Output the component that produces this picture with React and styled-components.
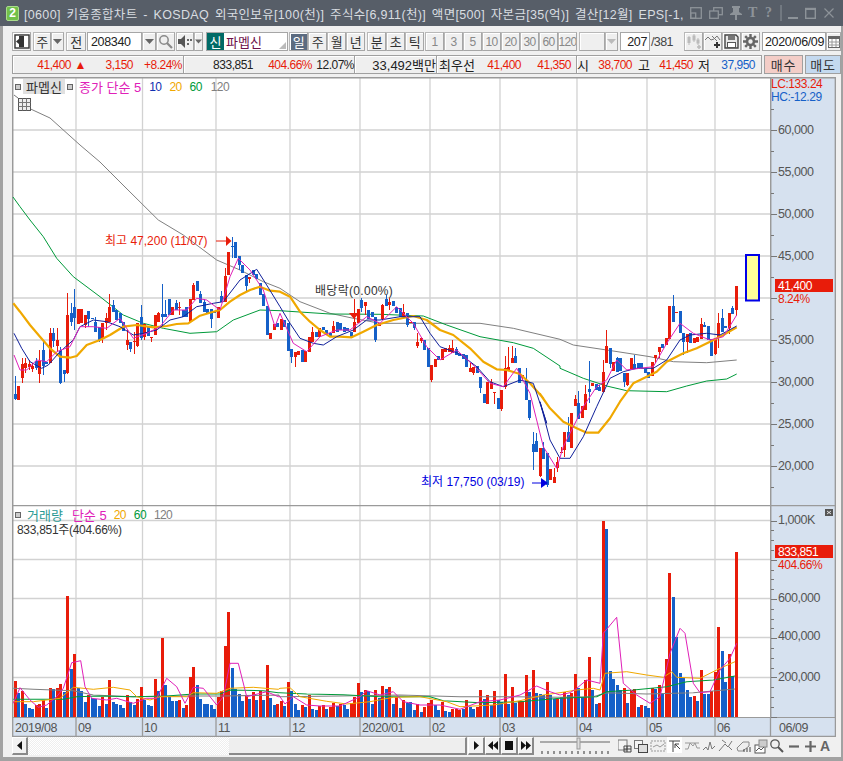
import React from "react";
import styled, { createGlobalStyle } from "styled-components";

const FONT = '"Liberation Sans","Noto Sans CJK KR",sans-serif';
const RED = "#e81c0a";
const BLUE = "#1560c8";
const PINK = "#e020b8";
const NAVY = "#10209a";
const ORANGE = "#f0a800";
const GREEN = "#009a3a";
const GRAY = "#808080";

const Global = createGlobalStyle`
  html, body { margin: 0; padding: 0; background: #f0f0f0; }
  #root { width: 843px; height: 761px; }
  * { box-sizing: border-box; }
`;

const Window = styled.div`
  width: 843px; height: 761px; display: flex; flex-direction: column; overflow: hidden;
  font-family: ${FONT}; font-size: 12px; letter-spacing: -0.6px; color: #333;
`;
const TitleBar = styled.div`
  height: 26px; flex: none; background: #575e68; display: flex; align-items: center;
  padding-left: 6px; color: #d9dde1;
`;
const AppBadge = styled.div`
  width: 13px; height: 15px; border-radius: 2px; background: #72c04a; color: #fff; border: 1px solid #a9dc8c;
  font-weight: bold; font-size: 12px; line-height: 13px; text-align: center; margin-right: 5px; letter-spacing: 0;
`;
const TitleText = styled.div`
  width: 660px; flex: none; white-space: nowrap; overflow: hidden; letter-spacing: 0.33px; font-size: 12.5px; word-spacing: 2px;
`;
const TitleIcons = styled.div`
  display: flex; align-items: center; margin-left: 6px; height: 26px;
`;
const TitleSvg = styled.svg`
  display: block; flex: none; margin-left: ${p => p.$ml || 0}px;
`;
const TitleGlyph = styled.span`
  font: bold 14px "Liberation Serif", serif; color: #8d9399; width: 11px; margin-left: ${p => p.$ml || 0}px; letter-spacing: 0;
`;
const Body = styled.div`
  flex: 1; display: flex; flex-direction: column; background: #f0f0f0;
  border-left: 3px solid #a2a2a2; border-right: 2px solid #a2a2a2; border-bottom: 4px solid #a2a2a2;
  padding: 6px 0 0 9px; position: relative;
`;
const Toolbar = styled.div`
  height: 19px; display: flex; align-items: stretch; flex: none;
`;
const ToolBtn = styled.div`
  width: ${p => p.$w}px; flex: none; margin-left: ${p => p.$ml || 0}px;
  display: flex; align-items: center; justify-content: center;
  background: ${p => (p.$active ? "#5c6b80" : "#efefef")};
  color: ${p => (p.$active ? "#fff" : p.$faint ? "#888" : "#333")};
  border: 1px solid #a6a6a6; border-top-color: #b8b8b8; border-left-color: #b8b8b8;
  box-shadow: inset 1px 1px 0 #fff;
  font-size: ${p => (p.$faint ? 12 : 13)}px; overflow: hidden;
`;
const Field = styled.div`
  width: ${p => p.$w}px; flex: none; margin-left: ${p => p.$ml || 0}px; background: #fff;
  border: 1px solid #a6a6a6; display: flex; align-items: center; padding-left: ${p => p.$pl ?? 3}px;
  color: #222; font-size: 12.5px; letter-spacing: -0.35px; justify-content: ${p => p.$end ? "flex-end" : "flex-start"};
  padding-right: 2px;
`;
const NameField = styled.div`
  width: 82px; flex: none; margin-left: 3px; background: #fff; border: 1px solid #a6a6a6; display: flex;
  align-items: stretch; position: relative; color: #6d0f4a; font-size: 13px; letter-spacing: 0;
`;
const SinTag = styled.div`
  width: 17px; background: #006a66; color: #fff; display: flex; align-items: center; justify-content: center; margin-right: 2px;
`;
const NameText = styled.div`
  display: flex; align-items: center;
`;
const Corner = styled.div`
  position: absolute; right: 1px; bottom: 1px; width: 0; height: 0;
  border-left: 7px solid transparent; border-bottom: 7px solid #bbb;
`;
const Count = styled.div`
  margin-left: 1px; width: 34px; display: flex; align-items: center; color: #444; font-size: 12.5px;
`;
const InfoRow = styled.div`
  height: 19px; margin-top: 4px; flex: none; display: flex;
`;
const InfoBox = styled.div`
  height: 19px; flex: none; width: ${p => p.$w}px; display: flex; align-items: center;
  background: #efefef; border: 1px solid #a0a0a0; border-left-width: ${p => (p.$first ? 1 : 0)}px;
  box-shadow: inset 1px 1px 0 #fff; position: relative; white-space: nowrap; color: #222;
`;
const InfoText = styled.span`
  width: ${p => p.$w}px; flex: none; text-align: right; color: ${p => p.$c || "#222"};
  font-size: ${p => (p.$ko ? 13 : 12)}px; letter-spacing: ${p => (p.$ko ? 0 : -0.5)}px;
`;
const TradeBtn = styled.div`
  width: ${p => p.$w}px; height: 19px; flex: none; margin-left: ${p => p.$ml}px; display: flex; align-items: center; justify-content: center;
  background: ${p => p.$bg}; border: 1px solid #a0a0a0; color: #333; font-size: 13px; letter-spacing: 0.8px;
`;
const Frame = styled.div`
  margin-top: 3px; width: 824px; flex: none; display: flex; flex-direction: column;
`;
const PaneRow = styled.div`
  display: flex; height: ${p => p.$h}px; flex: none; position: relative;
`;
const Plot = styled.svg`
  display: block; width: 758px; height: 100%; flex: none; background: #fff;
  font-family: ${FONT}; font-size: 12px; letter-spacing: -0.6px;
`;
const Axis = styled.svg`
  display: block; width: 66px; height: 100%; flex: none; background: #d6e1ef;
  font-family: ${FONT}; font-size: 12.5px; letter-spacing: -0.45px;
`;
const TimeStrip = styled.svg`
  display: block; width: 824px; height: 19px; flex: none; background: #d6e1ef;
  font-family: ${FONT}; font-size: 12.5px; letter-spacing: -0.45px;
`;
const Legend = styled.div`
  position: absolute; left: 3px; top: ${p => p.$top}px; display: flex; align-items: center; height: 15px; white-space: nowrap;
`;
const LegendSquare = styled.i`
  width: 6px; height: 6px; background: #ccc; border: 1px solid #666; margin: 0 ${p => p.$mr || 0}px 0 ${p => p.$ml || 0}px; flex: none;
`;
const StockChip = styled.span`
  height: 15px; width: 42px; background: #e0e0e0; display: flex; align-items: center; justify-content: center; margin: 0 2px 0 2px; color: #333; letter-spacing: 0; font-size: 13px;
`;
const LegendItem = styled.span`
  color: ${p => p.$c}; margin-left: ${p => p.$ml || 0}px; font-size: ${p => (p.$ko ? 13 : 12)}px; letter-spacing: ${p => (p.$ko ? 0 : -0.6)}px;
`;
const VolumeNote = styled.div`
  position: absolute; left: 5px; top: 15px; color: #333; font-size: 12px; letter-spacing: -0.3px; white-space: nowrap;
`;
const ScrollRow = styled.div`
  height: 18px; width: 824px; flex: none; display: flex; align-items: stretch;
`;
const ScrollBtn = styled.div`
  width: ${p => p.$w}px; flex: none; margin-left: ${p => p.$ml || 0}px; background: #f2f2f2; border-right: 2px solid #8a8a8a; border-bottom: 2px solid #8a8a8a;
  display: flex; align-items: center; justify-content: center; border-top: 1px solid #fff; border-left: 1px solid #fff;
`;
const ScrollTrack = styled.div`
  width: 201px; flex: none; background: repeating-conic-gradient(#fff 0 25%, #eee 0 50%) 0 0/2px 2px;
`;
const ScrollThumb = styled.div`
  width: 238px; flex: none; background: #eeeeee; border-top: 1px solid #fff; border-right: 2px solid #8a8a8a; border-bottom: 2px solid #8a8a8a;
`;
const IconStrip = styled.svg`
  display: block; flex: none; margin-left: 6px;
`;
const SliderSvg = styled.svg`
  display: block; margin-left: 6px; flex: none;
`;
const AGlyph = styled.span`
  font-weight: bold; font-size: 14px; color: #666; margin-left: -16px; letter-spacing: 0; line-height: 18px;
`;

const parse = (s, start, y0) =>
  s.trim().split(/\s+/).map((t, k) => {
    const c = t[0];
    const [a, b, h, l] = t.slice(1).split(",").map(Number);
    const Y = v => y0 + v / 3;
    return { i: start + k, c, top: Y(a), bot: Y(b), hi: Y(h ?? a), lo: Y(l ?? b) };
  });

const A = parse(`b522,537,468,540 r498,540 r432,473,415,490 r430,445,413,460 r432,440,420,450 r438,447,428,455 b424,445,415,450 r423,463,390,488 b390,437,365,465 b425,432 r340,428,325,430 b340,362,325,380 r360,378,325,395 b392,490,380,492 b450,462,450,485 r285,460,218,462 b280,305,250,318 b262,295,208,330 r268,312 r268,310 r285,315,285,325 b272,296,272,320 b295,297 b305,335,290,335 b320,360,320,365 r310,355,310,370 r293,308,280,330 r260,305,222,305 b255,275,240,275 b270,300 b280,310 b305,332 r360,375,330,390 b365,387,365,395 r362,367,335,402 r310,378,310,380 b292,355,255,360 r312,350,312,360 b322,348 r352,354,352,365 r285,345 r280,305,275,305 b283,290,192,320 b283,292,240,292 b238,285 r262,285 b250,270,240,270 r262,265,245,285 b270,290 b262,290 r238,305 r195,240,190,240 b182,212 b222,250,212,250 b245,275,238,275 b268,282 b268,298,268,325 b275,280 r262,295 b228,245,213,245 r168,245,145,245 r97,165 b78,82,52,115 b65,115 b108,135,108,150 b135,160 b165,198,165,215 r172,176,172,190 b150,165 b162,178 b190,225 b222,258 b258,345 r338,358 r312,330 b310,322`, 0, 220);
const B = parse(`r118,150 b120,140 b130,212 b208,230,208,250 r215,232,215,260 r213,225 b210,245 r212,245 r170,215 r155,185,140,185 b155,170 r145,170 b140,150 b150,165 b160,170 r138,160,122,160 b125,155 b130,150 b140,155 b145,152 b155,175 r125,155,58,155 r88,130 b60,85,55,95 r65,78,65,105 b90,118 b95,110 b110,180,110,185 r128,138 r75,118,72,120 b57,78,45,78 r65,75,55,90 b62,78 b80,100 b85,110 r97,110,72,110 b100,135,100,140 r125,130 b125,145,125,150 r187,197,160,203 r175,182,170,190 b180,210 b205,260 r255,300,255,305 r237,260 b228,240 r207,240 r203,215 r205,215,195,215 r205,220,180,220 b207,225,200,225 b222,228 b222,238 b225,262 r265,275,250,275 r262,280,262,285 b258,278 b290,325,290,340 b342,370 r305,373 r305,328,298,328 r335,340,335,372 b355,387 r330,388,330,392 r265,322,228,328 r262,272,200,272 r235,250,197,250 b228,250,205,250 b265,308,265,310 r285,292,285,300 b300,360,265,360 b360,415,360,420 b492,515,457,570 b483,515,460,515 r505,588,505,590 b505,538,485,538 b518,615,518,620 r568,600 r592,610,565,610 r545,565,530,575`, 76, 280);
const C = parse(`r635,640,620,640 r575,630,575,650 b575,605,530,605 r520,625 r478,498,465,498 b490,538,452,538 r498,535 r463,510,435,510 b448,456,362,490 r430,437 b432,450 b440,452,435,452 r397,455,360,455 r318,368,270,368 b323,372,323,385 r365,392 b355,395,350,395 b355,392 b400,425,400,442 r400,435,400,437 r355,388 b372,388,345,388 b370,388 b370,385 b388,400 b395,415 r365,408 r345,355,345,370 r322,335,322,355 b313,325 r295,315 r198,298 b198,247,165,247 r215,220 b212,280 b280,305,280,345 r282,305,282,340 b280,308 r295,310 r292,305 r252,298,235,298 b255,260,245,260 b258,300 b298,348 r295,342,295,345 r250,295,220,325 b235,275,207,275 b258,263 r220,265,220,282 b205,222,198,222 r138,210,138,228`, 156, 240);
const candles = [...A, ...B, ...C];

const path = (...segs) =>
  segs
    .flatMap(([x0, y0, s]) =>
      s.trim().split(/\s+/).map(p => {
        const [x, y] = p.split(",").map(Number);
        return `${(x0 + x / 3).toFixed(1)},${(y0 + y / 3).toFixed(1)}`;
      })
    )
    .join(" ");

const maOrange = path(
  [0, 220, "40,250 60,275 90,315 120,350 150,385 180,410 210,413 230,408 260,375 300,360 330,345 370,320 410,315 460,322 500,318 530,312 565,310 600,287 640,275 660,270 690,245 720,225 750,210 780,200 810,212 840,215"],
  [280, 280, "30,50 60,95 90,125 120,150 150,170 180,170 215,172 250,155 290,135 340,120 400,108 440,120 480,150 520,165 570,205 610,245 650,268 680,270 720,282 750,310 790,355"],
  [540, 240, "0,462 30,505 70,545 110,565 140,578 175,578 210,535 240,485 280,430 320,410 350,395 380,365 430,340 470,325 510,305 550,285 590,262"]
);
const maGray = path(
  [0, 0, "66,315 150,354 240,435 300,486 375,561"],
  [0, 220, "475,0 550,45 650,120 720,150 790,185 840,205"],
  [280, 280, "60,65 150,100 220,115 300,130 450,130 600,130 700,145 840,178"],
  [540, 240, "100,315 200,330 330,350 400,365 500,368 590,360"]
);
const maGreen = path(
  [0, 0, "39,591 60,620"],
  [0, 220, "90,0 130,50 170,115 220,170 300,230 370,285 430,310 490,325 570,340 650,335 700,300 780,270 840,272"],
  [280, 280, "0,92 150,102 300,103 430,108 500,135 600,170 700,188 760,205 840,258"],
  [540, 240, "60,385 130,415 200,438 260,452 380,455 440,438 500,423 560,417 590,402"]
);
const maNavy = path(
  [0, 220, "42,340 65,385 90,425 125,445 145,435 180,395 220,360 240,320 280,300 320,305 360,320 400,345 430,340 470,330 510,300 550,290 590,260 640,250 670,245 720,180 770,148 800,195 840,260"],
  [280, 280, "30,130 60,175 100,190 130,195 170,170 220,150 260,120 300,120 360,110 420,110 450,160 480,200 540,222 590,260 630,305 670,320 720,300 760,310 800,430"],
  [540, 240, "0,485 30,600 60,655 90,655 130,590 170,500 210,415 250,395 290,385 340,385 380,360 420,300 450,285 500,280 540,285 590,258"]
);
const maPink = path(
  [0, 220, "42,405 60,450 80,450 110,420 140,425 170,395 210,380 240,320 280,320 320,325 360,295 400,355 440,340 480,320 520,270 560,270 590,235 620,240 660,270 690,170 715,115 750,150 790,210 825,320"],
  [280, 280, "0,100 40,190 80,215 120,170 170,150 210,150 260,110 300,130 350,80 400,130 440,200 480,240 530,210 590,265 630,310 670,320 710,265 750,340 790,500 830,565"],
  [540, 240, "70,620 100,560 130,500 170,440 200,420 230,360 260,390 300,385 340,380 380,310 420,250 460,280 510,300 550,290 590,225"]
);

const volTokens = (
  "r543 b578 r573 b612 b624 b627 r615 r612 r600 b623 r564 b568 r564 r552 b575 r288 b508 r462 b563 b573 b605 r585 b594 b596 b618 r590 b611 r540 b606 b612 b615 b624 r585 b606 b614 r597 r561 b600 b616 b618 r537 b573 r414 b555 b590 b602 b603 r600 b624 r614 r531 r501 b555 b597 b612 b612 b615 b627 r590 r573 r438 r336 b504 b567 b582 b603 r588 b597 r576 b600 r573 b600 r495 b594 b615 r612 " +
  "r603 b618 r546 b573 b612 b630 r615 b621 r585 b627 b630 r618 r615 b627 r621 r609 b618 r612 b615 b627 r609 r590 r549 b576 r570 b573 b612 r570 b593 r558 b567 r561 b612 r590 b624 r600 b608 b606 b630 r612 b636 r621 r609 r600 b615 b630 r606 b633 b636 r628 r628 r630 b628 r600 b622 b627 r622 r570 b597 r585 b616 r573 b600 b606 r522 b612 r561 b609 r603 r603 r525 b576 r510 b579 b582 b585 r546 b585 b597 r597 " +
  "b590 r576 b585 r578 r522 b565 b590 r540 r471 b570 b612 r609 r63 b87 b513 b537 b555 b570 r564 b609 r570 r568 b621 r615 b618 b624 r564 b567 r555 b579 r477 r219 b291 b411 b519 b534 b570 b591 r588 b603 r510 b582 b582 r573 r516 r381 b453 b546 r462 b528 r156"
).split(" ");

const vPink = path(
  [0, 500, "40,610 60,563 90,600 115,622 140,615 170,590 190,565 215,488 242,482 255,560 275,595 320,600 350,595 400,610 440,595 470,595 500,535 530,560 555,610 580,562 610,565 650,615 670,590 690,490 715,490 740,590 800,575 835,590"],
  [280, 500, "0,590 15,612 40,590 80,615 120,618 180,618 240,590 260,572 300,585 340,575 370,605 420,615 480,615 540,628 600,605 660,600 720,585 770,558 810,575"],
  [560, 500, "0,585 30,578 50,565 80,540 120,550 130,400 170,352 190,550 230,585 270,610 300,590 330,460 360,385 375,400 400,550 420,578 450,575 480,510 510,475 530,430"]
);
const vOrange = path(
  [0, 500, "40,605 100,605 180,595 220,562 280,568 340,562 390,570 410,590 450,600 480,590 560,590 580,578 650,580 690,565 760,562 835,568"],
  [280, 500, "0,565 30,563 60,590 140,604 200,612 270,605 340,592 420,590 500,605 540,620 640,615 720,602 790,585"],
  [560, 500, "0,578 50,570 100,565 120,570 135,520 200,515 260,525 310,532 335,515 350,532 420,535 480,505 525,485"]
);
const vGreen = path(
  [0, 500, "40,598 120,598 190,598 230,590 300,588 400,590 500,588 580,582 660,582 690,570 790,572 835,578"],
  [280, 500, "0,578 80,582 190,584 300,590 450,590 490,602 600,608 720,605"],
  [560, 500, "0,595 110,590 140,575 220,570 320,560 380,545 460,540 525,528"]
);
const vGray = path(
  [0, 500, "40,565 100,568 220,572 280,585 400,590 560,588 670,588 835,585"],
  [280, 500, "0,590 180,588 360,585 540,590 700,590"],
  [560, 500, "0,592 100,590 140,578 260,582 400,578 525,567"]
);

const GRID_X = [76, 142.5, 216, 290, 360, 430, 500, 577, 647, 715];
const barX = i => 14.5 + 3.5 * i;

const FrameLine = ({ x1, y1, x2, y2 }) => <line x1={x1} y1={y1} x2={x2} y2={y2} stroke="#9a9a9a" strokeWidth="1.5" />;

const GridLines = ({ top, bottom, ys }) => (
  <g stroke="#d2d2d2" strokeWidth="1.3">
    {GRID_X.map(x => <line key={x} x1={x} y1={top} x2={x} y2={bottom} />)}
    {ys.map(y => <line key={y} x1="12" y1={y} x2="770" y2={y} />)}
  </g>
);

const PricePlot = () => (
  <Plot viewBox="12 77 758 428">
    <GridLines top={77} bottom={505} ys={[130, 172, 214, 256, 298, 340, 382, 424, 466]} />
    <FrameLine x1="12.7" y1="77" x2="12.7" y2="505" />
    <FrameLine x1="12" y1="77.7" x2="770" y2="77.7" />
    <g fill="none" strokeLinejoin="round">
      <polyline points={maGray} stroke={GRAY} strokeWidth="1" />
      <polyline points={maGreen} stroke={GREEN} strokeWidth="1" />
    </g>
    {candles.map(d => {
      const x = Math.round(barX(d.i));
      const col = d.c === "r" ? RED : BLUE;
      return (
        <g key={d.i} fill={col} shapeRendering="crispEdges">
          <rect x={x} y={d.hi} width="1" height={Math.max(d.lo - d.hi, 1)} />
          <rect x={x - 1} y={d.top} width="3" height={Math.max(d.bot - d.top, 1)} />
        </g>
      );
    })}
    <g fill="none" strokeLinejoin="round">
      <polyline points={maOrange} stroke={ORANGE} strokeWidth="2.2" />
      <polyline points={maNavy} stroke={NAVY} strokeWidth="1" />
      <polyline points={maPink} stroke={PINK} strokeWidth="1" />
    </g>
    <text x="105" y="245" fill={RED} letterSpacing="0">최고 47,200 (11/07)</text>
    <line x1="216" y1="241" x2="226" y2="241" stroke={RED} strokeWidth="1" />
    <polygon points="226,236 231.5,241 226,246" fill={RED} />
    <text x="315" y="295" fill="#333" letterSpacing="0.3">배당락(0.00%)</text>
    <polygon points="349,313 359,313 354,319" fill={RED} />
    <text x="421" y="486" fill="#0000e0" letterSpacing="0">최저 17,750 (03/19)</text>
    <line x1="532" y1="483" x2="543" y2="483" stroke="#0000e0" strokeWidth="1" />
    <polygon points="541,478 548,483 541,488" fill="#0000e0" />
    <rect x="746" y="255" width="13" height="45.5" fill="#ffff99" stroke="#0000e8" strokeWidth="2" />
    <g fill="none" stroke="#777" strokeWidth="1">
      <rect x="18.5" y="98.5" width="12" height="12" fill="#eee" stroke="#555" />
      <path d="M18.5 102.5h12M18.5 106.5h12M22.5 98.5v12M26.5 98.5v12M14 95l4 3" />
    </g>
  </Plot>
);

const PriceAxis = () => (
  <Axis viewBox="770 77 66 428">
    <FrameLine x1="770.7" y1="77" x2="770.7" y2="505" />
    <FrameLine x1="835.4" y1="77" x2="835.4" y2="505" />
    <FrameLine x1="770" y1="77.7" x2="836" y2="77.7" />
    <text x="771" y="88" fill="#e81c0a" fontSize="12">LC:133.24</text>
    <text x="771" y="101" fill="#1560c8" fontSize="12">HC:-12.29</text>
    <g stroke="#777" strokeWidth="1">
      {Array.from({ length: 20 }, (_, k) => 109 + 21 * k).map(y => (
        <line key={y} x1="771" x2={(y - 130) % 42 === 0 ? 777 : 774} y1={y + 0.5} y2={y + 0.5} />
      ))}
    </g>
    <g fill="#555">
      {["60,000", "55,000", "50,000", "45,000", "", "35,000", "30,000", "25,000", "20,000"].map((t, k) => t && (
        <text key={t} x="778" y={134 + 42 * k}>{t}</text>
      ))}
    </g>
    <rect x="775" y="279" width="58" height="13" fill={RED} />
    <text x="778" y="290" fontSize="12" fill="#fff">41,400</text>
    <text x="778" y="303" fontSize="12" fill={RED}>8.24%</text>
  </Axis>
);

const VolumePlot = () => (
  <Plot viewBox="12 505 758 213">
    <GridLines top={505} bottom={718} ys={[520.5, 559.5, 598.5, 637.5, 677.5]} />
    <FrameLine x1="12.7" y1="505" x2="12.7" y2="718" />
    <FrameLine x1="12" y1="505.5" x2="770" y2="505.5" />
    <FrameLine x1="12" y1="717.7" x2="770" y2="717.7" />
    {volTokens.map((t, i) => {
      const top = 500 + Number(t.slice(1)) / 3;
      return (
        <rect key={i} x={Math.round(barX(i)) - 1} y={top} width="3" height={717 - top}
          fill={t[0] === "r" ? RED : BLUE} shapeRendering="crispEdges" />
      );
    })}
    <g fill="none" strokeWidth="1" strokeLinejoin="round">
      <polyline points={vGray} stroke={GRAY} strokeWidth="1.1" />
      <polyline points={vGreen} stroke={GREEN} strokeWidth="1.1" />
      <polyline points={vOrange} stroke={ORANGE} />
      <polyline points={vPink} stroke={PINK} />
    </g>
  </Plot>
);

const VolumeAxis = () => (
  <Axis viewBox="770 505 66 213">
    <FrameLine x1="770.7" y1="505" x2="770.7" y2="718" />
    <FrameLine x1="835.4" y1="505" x2="835.4" y2="718" />
    <FrameLine x1="770" y1="505.5" x2="836" y2="505.5" />
    <FrameLine x1="770" y1="717.7" x2="836" y2="717.7" />
    <g stroke="#777" strokeWidth="1">
      {Array.from({ length: 21 }, (_, k) => 520.5 + 9.8 * k).map((y, k) => (
        <line key={k} x1="771" x2={k % 4 === 0 ? 777 : 774} y1={Math.round(y) + 0.5} y2={Math.round(y) + 0.5} />
      ))}
    </g>
    <g fill="#555">
      <text x="778" y="524">1,000K</text>
      <text x="778" y="602">600,000</text>
      <text x="778" y="640">400,000</text>
      <text x="778" y="681">200,000</text>
    </g>
    <rect x="825" y="509" width="8" height="7" fill="#555" />
    <path d="M827 511l4 3M831 511l-4 3" stroke="#fff" strokeWidth="0.8" />
    <rect x="775" y="545" width="58" height="13" fill={RED} />
    <text x="778" y="556" fontSize="12" fill="#fff">833,851</text>
    <text x="778" y="569" fontSize="12" fill={RED}>404.66%</text>
  </Axis>
);

const TIME = [["2019/08", 15], ["09", 78], ["10", 144], ["11", 218], ["12", 292], ["2020/01", 362], ["02", 432], ["03", 502], ["04", 579], ["05", 649], ["06", 717]];
const TimeAxis = () => (
  <TimeStrip viewBox="12 718 824 19">
    <g stroke="#9a9a9a" strokeWidth="1.3">
      {[...GRID_X, 770.5].map(x => <line key={x} x1={x} y1="718" x2={x} y2="737" />)}
      <line x1="12.7" y1="718" x2="12.7" y2="737" />
      <line x1="835.4" y1="718" x2="835.4" y2="737" />
      <line x1="12" y1="736.3" x2="836" y2="736.3" />
    </g>
    <g fill="#555">
      {TIME.map(([t, x]) => <text key={t} x={x} y="732">{t}</text>)}
      <text x="779" y="732">06/09</text>
    </g>
  </TimeStrip>
);

const Caret = ({ c = "#666" }) => (
  <svg width="9" height="5" viewBox="0 0 9 5"><polygon points="0,0 9,0 4.5,5" fill={c} /></svg>
);
const PanelIcon = () => (
  <svg width="16" height="15" viewBox="0 0 16 15">
    <rect x="1" y="1" width="14" height="13" fill="#fff" stroke="#333" strokeWidth="1.4" />
    <rect x="5" y="2" width="5" height="11" fill="#333" />
    <polygon points="2,7.5 6,4 6,11" fill="#333" />
  </svg>
);
const SearchIcon = () => (
  <svg width="15" height="15" viewBox="0 0 15 15" fill="none" stroke="#8a8a8a">
    <circle cx="6" cy="6" r="4.2" strokeWidth="1.5" />
    <path d="M9 9l5 5" strokeWidth="2.2" />
  </svg>
);
const SpeakerIcon = () => (
  <svg width="14" height="13" viewBox="0 0 14 13">
    <polygon points="0,4 3,4 7,0 7,13 3,9 0,9" fill="#555" />
    <path d="M9 4h2v2H9zM9 8h2v2H9zM12 4h2v2h-2z" fill="#666" />
  </svg>
);
const CandleAddIcon = () => (
  <svg width="16" height="15" viewBox="0 0 16 15">
    <path d="M3 2v9M8 0v8M12 4v7" stroke="#bbb" />
    <rect x="1.5" y="3" width="3" height="6" fill="#bbb" />
    <rect x="6.5" y="1.5" width="3" height="5" fill="#bbb" />
    <rect x="10.5" y="5.5" width="3" height="4" fill="#bbb" />
    <path d="M11 13h4M13 11v4" stroke="#bbb" strokeWidth="1.5" />
  </svg>
);
const LineAddIcon = () => (
  <svg width="16" height="15" viewBox="0 0 16 15" fill="none">
    <path d="M0 6l3-3 3 3 3-1 3-3 3 4" stroke="#777" />
    <path d="M7 2l5 5" stroke="#777" />
    <path d="M9 11h6M12 8v6" stroke="#333" strokeWidth="2" />
  </svg>
);
const SaveIcon = () => (
  <svg width="15" height="15" viewBox="0 0 15 15">
    <path d="M1 1h11l2 2v11H1z" fill="#e8e8e8" stroke="#444" strokeWidth="1.4" />
    <rect x="4" y="2" width="7" height="4" fill="#777" />
    <rect x="3.5" y="8.5" width="8" height="5" fill="#fff" stroke="#555" />
  </svg>
);
const GearIcon = () => (
  <svg width="15" height="15" viewBox="0 0 15 15">
    <circle cx="7.5" cy="7.5" r="3.5" fill="none" stroke="#666" strokeWidth="2.6" />
    <g stroke="#666" strokeWidth="2.4">
      <path d="M7.5 0v3M7.5 12v3M0 7.5h3M12 7.5h3M2.2 2.2l2 2M10.8 10.8l2 2M12.8 2.2l-2 2M4.2 10.8l-2 2" />
    </g>
  </svg>
);
const CalIcon = () => (
  <svg width="12" height="13" viewBox="0 0 12 13">
    <rect x="0.5" y="1.5" width="11" height="11" fill="#fff" stroke="#666" />
    <rect x="0" y="1" width="12" height="3" fill="#666" />
    <path d="M4 4v8M8 4v8M0 7h12M0 10h12" stroke="#999" />
  </svg>
);
const ArrowRow = ({ d }) => (
  <svg width="12" height="11" viewBox="0 0 12 11"><path d={d} fill="#111" /></svg>
);

const TitleActions = () => (
  <TitleIcons>
    <TitleSvg $ml={0} width="12" height="12" viewBox="0 0 12 12" fill="none" stroke="#8d9399" strokeWidth="1.3">
      <rect x="0.7" y="0.7" width="10.6" height="10.6" /><rect x="0.7" y="6" width="5" height="5.3" />
    </TitleSvg>
    <TitleSvg $ml={7} width="14" height="12" viewBox="0 0 14 12" fill="none" stroke="#8d9399" strokeWidth="1.3">
      <rect x="4.7" y="0.7" width="8.6" height="7" /><rect x="0.7" y="4" width="8.6" height="7.3" fill="#575e68" />
    </TitleSvg>
    <TitleSvg $ml={7} width="12" height="14" viewBox="0 0 12 14" fill="#8d9399">
      <path d="M2 0h8v2H9v4l3 2v1H7v5H5V9H0V8l3-2V2H2z" />
    </TitleSvg>
    <TitleGlyph $ml={6}>T</TitleGlyph>
    <TitleGlyph $ml={6}>?</TitleGlyph>
    <TitleSvg $ml={3} width="44" height="16" viewBox="0 0 44 16" fill="none" stroke="#8d9399" strokeWidth="1.4">
      <path d="M2 0v16" strokeWidth="1" />
      <path d="M9 13h10" strokeWidth="2" />
    </TitleSvg>
    <TitleSvg $ml={-18} width="11" height="12" viewBox="0 0 11 12" fill="none" stroke="#8d9399">
      <rect x="0.7" y="1.5" width="9.6" height="9.8" strokeWidth="1.4" /><path d="M0 2h11" strokeWidth="2" />
    </TitleSvg>
    <TitleSvg $ml={8} width="10" height="10" viewBox="0 0 10 10" stroke="#8d9399" strokeWidth="1.2">
      <path d="M0.5 0.5l9 9M9.5 0.5l-9 9" />
    </TitleSvg>
  </TitleIcons>
);

const BottomIcons = () => (
  <IconStrip width="218" height="18" viewBox="618 737 218 18" fill="none" stroke="#777">
    <rect x="618" y="740" width="9" height="10" fill="#f4f4f4" />
    <path d="M624 746h7v6h-7zM627 746v6M624 749h7" stroke="#444" />
    <rect x="634.5" y="740.5" width="8" height="8" fill="#f4f4f4" />
    <rect x="638.5" y="744.5" width="9" height="8" fill="#ddd" stroke="#444" />
    <path d="M651 741h14v10h-14z" strokeDasharray="2 1" stroke="#999" />
    <path d="M653 747l4-2 3 2 4-3" stroke="#999" />
    <rect x="667" y="737" width="15" height="16" fill="#fff" stroke="none" />
    <path d="M669 741h11M673 741v11" stroke="#444" strokeWidth="1" />
    <path d="M675 744l5 5M675 744v4M675 744h4" stroke="#444" />
    <path d="M685 749h3l2-6 3 3 2-3 2 5h3M685 743h14" stroke="#999" />
    <path d="M703 750l3-3 2 3 2-8 2 7 3-3" stroke="#777" />
    <path d="M719 751l6-7 3 3 4-6M722 740l4 3M729 747l3 3" stroke="#777" />
    <path d="M737 748l6-6h6v4l-6 5h-5z" fill="#eee" stroke="#888" />
    <path d="M744 752v-3M747 752v-4M750 752v-5" stroke="#444" />
    <rect x="755" y="745" width="10" height="8" fill="#fff" stroke="#555" />
    <rect x="759" y="740" width="8" height="7" fill="#ccc" stroke="#888" />
    <path d="M756 751l3-3 2 2 3-3" stroke="#555" />
    <circle cx="775" cy="744" r="4.2" strokeWidth="1.3" stroke="#555" />
    <path d="M778 747l5 5" strokeWidth="2" stroke="#555" />
    <path d="M789 746.5h10" strokeWidth="2.2" stroke="#666" />
    <path d="M805 746.5h11M810.5 741v11" strokeWidth="2.2" stroke="#666" />
  </IconStrip>
);

const Slider = () => (
  <SliderSvg width="72" height="18" viewBox="0 0 72 18">
    <line x1="0" y1="5" x2="70" y2="5" stroke="#aaa" strokeWidth="2" />
    <rect x="37" y="1" width="3" height="11" fill="#ddd" stroke="#999" />
    {Array.from({ length: 12 }, (_, k) => <line key={k} x1={2 + k * 6} x2={2 + k * 6} y1="14" y2="17" stroke="#333" />)}
  </SliderSvg>
);

export default function App() {
  return (
    <Window>
      <Global />
      <TitleBar>
        <AppBadge>2</AppBadge>
        <TitleText>[0600] 키움종합차트 - KOSDAQ 외국인보유[100(천)] 주식수[6,911(천)] 액면[500] 자본금[35(억)] 결산[12월] EPS[-1,</TitleText>
        <TitleActions />
      </TitleBar>
      <Body>
        <Toolbar>
          <ToolBtn $w={19}><PanelIcon /></ToolBtn>
          <ToolBtn $w={18} $ml={2}>주</ToolBtn>
          <ToolBtn $w={13}><Caret /></ToolBtn>
          <ToolBtn $w={20} $ml={2}>전</ToolBtn>
          <Field $w={55} $ml={1}>208340</Field>
          <ToolBtn $w={14}><Caret /></ToolBtn>
          <ToolBtn $w={19}><SearchIcon /></ToolBtn>
          <ToolBtn $w={18} $ml={1}><SpeakerIcon /></ToolBtn>
          <ToolBtn $w={9}><Caret /></ToolBtn>
          <NameField>
            <SinTag>신</SinTag>
            <NameText>파멥신</NameText>
            <Corner />
          </NameField>
          <ToolBtn $w={19} $ml={1} $active>일</ToolBtn>
          <ToolBtn $w={19}>주</ToolBtn>
          <ToolBtn $w={19}>월</ToolBtn>
          <ToolBtn $w={19}>년</ToolBtn>
          <ToolBtn $w={19} $ml={2}>분</ToolBtn>
          <ToolBtn $w={19}>초</ToolBtn>
          <ToolBtn $w={19}>틱</ToolBtn>
          {["1", "3", "5", "10", "20", "30", "60", "120"].map((t, k) => (
            <ToolBtn key={t} $w={19} $ml={k === 0 ? 1 : 0} $faint>{t}</ToolBtn>
          ))}
          <ToolBtn $w={26} $ml={2} />
          <ToolBtn $w={13}><Caret c="#bbb" /></ToolBtn>
          <Field $w={30} $ml={2} $end>207</Field>
          <Count>/381</Count>
          <ToolBtn $w={19} $ml={-1}><CandleAddIcon /></ToolBtn>
          <ToolBtn $w={19}><LineAddIcon /></ToolBtn>
          <ToolBtn $w={19}><SaveIcon /></ToolBtn>
          <ToolBtn $w={19}><GearIcon /></ToolBtn>
          <Field $w={64} $ml={2} $pl={2}>2020/06/09</Field>
          <ToolBtn $w={15}><CalIcon /></ToolBtn>
        </Toolbar>
        <InfoRow>
          <InfoBox $w={172} $first>
            <InfoText $w={58} $c={RED}>41,400</InfoText>
            <InfoText $w={15} $c={RED}>▲</InfoText>
            <InfoText $w={47} $c={RED}>3,150</InfoText>
            <InfoText $w={49} $c={RED}>+8.24%</InfoText>
          </InfoBox>
          <InfoBox $w={171}>
            <InfoText $w={69}>833,851</InfoText>
            <InfoText $w={59} $c={RED}>404.66%</InfoText>
            <InfoText $w={42}>12.07%</InfoText>
          </InfoBox>
          <InfoBox $w={82}>
            <InfoText $w={81} $ko>33,492백만</InfoText>
          </InfoBox>
          <InfoBox $w={140}>
            <InfoText $w={38} $ko>최우선</InfoText>
            <InfoText $w={46} $c={RED}>41,400</InfoText>
            <InfoText $w={50} $c={RED}>41,350</InfoText>
          </InfoBox>
          <InfoBox $w={185}>
            <InfoText $w={12} $ko>시</InfoText>
            <InfoText $w={43} $c={RED}>38,700</InfoText>
            <InfoText $w={18} $ko>고</InfoText>
            <InfoText $w={43} $c={RED}>41,450</InfoText>
            <InfoText $w={17} $ko>저</InfoText>
            <InfoText $w={45} $c={BLUE}>37,950</InfoText>
          </InfoBox>
          <TradeBtn $w={39} $ml={2} $bg="#f3cdc7">매수</TradeBtn>
          <TradeBtn $w={36} $ml={2} $bg="#c4d9ef">매도</TradeBtn>
        </InfoRow>
        <Frame>
          <PaneRow $h={428}>
            <PricePlot />
            <PriceAxis />
            <Legend $top={2}>
              <LegendSquare />
              <StockChip>파멥신</StockChip>
              <LegendSquare $mr={6} />
              <LegendItem $c={PINK} $ko>종가 단순 5</LegendItem>
              <LegendItem $c="#1030b0" $ml={8}>10</LegendItem>
              <LegendItem $c={ORANGE} $ml={8}>20</LegendItem>
              <LegendItem $c={GREEN} $ml={8}>60</LegendItem>
              <LegendItem $c={GRAY} $ml={9}>120</LegendItem>
            </Legend>
          </PaneRow>
          <PaneRow $h={213}>
            <VolumePlot />
            <VolumeAxis />
            <Legend $top={2}>
              <LegendSquare $mr={6} />
              <LegendItem $c="#2a9a94" $ko>거래량</LegendItem>
              <LegendItem $c={PINK} $ml={9} $ko>단순 5</LegendItem>
              <LegendItem $c={ORANGE} $ml={7}>20</LegendItem>
              <LegendItem $c={GREEN} $ml={8}>60</LegendItem>
              <LegendItem $c={GRAY} $ml={8}>120</LegendItem>
            </Legend>
            <VolumeNote>833,851주(404.66%)</VolumeNote>
          </PaneRow>
          <TimeAxis />
        </Frame>
        <ScrollRow>
          <ScrollBtn $w={16}><ArrowRow d="M8 1v9L3 5.5z" /></ScrollBtn>
          <ScrollTrack />
          <ScrollThumb />
          <ScrollBtn $w={17} $ml={1}><ArrowRow d="M4 1v9l5-4.5z" /></ScrollBtn>
          <ScrollBtn $w={16}><ArrowRow d="M6 1v9L1 5.5zM11 1v9L6 5.5z" /></ScrollBtn>
          <ScrollBtn $w={17}><ArrowRow d="M2 1h8v9H2z" /></ScrollBtn>
          <ScrollBtn $w={16}><ArrowRow d="M1 1v9l5-4.5zM6 1v9l5-4.5z" /></ScrollBtn>
          <Slider />
          <BottomIcons />
          <AGlyph>A</AGlyph>
        </ScrollRow>
      </Body>
    </Window>
  );
}
